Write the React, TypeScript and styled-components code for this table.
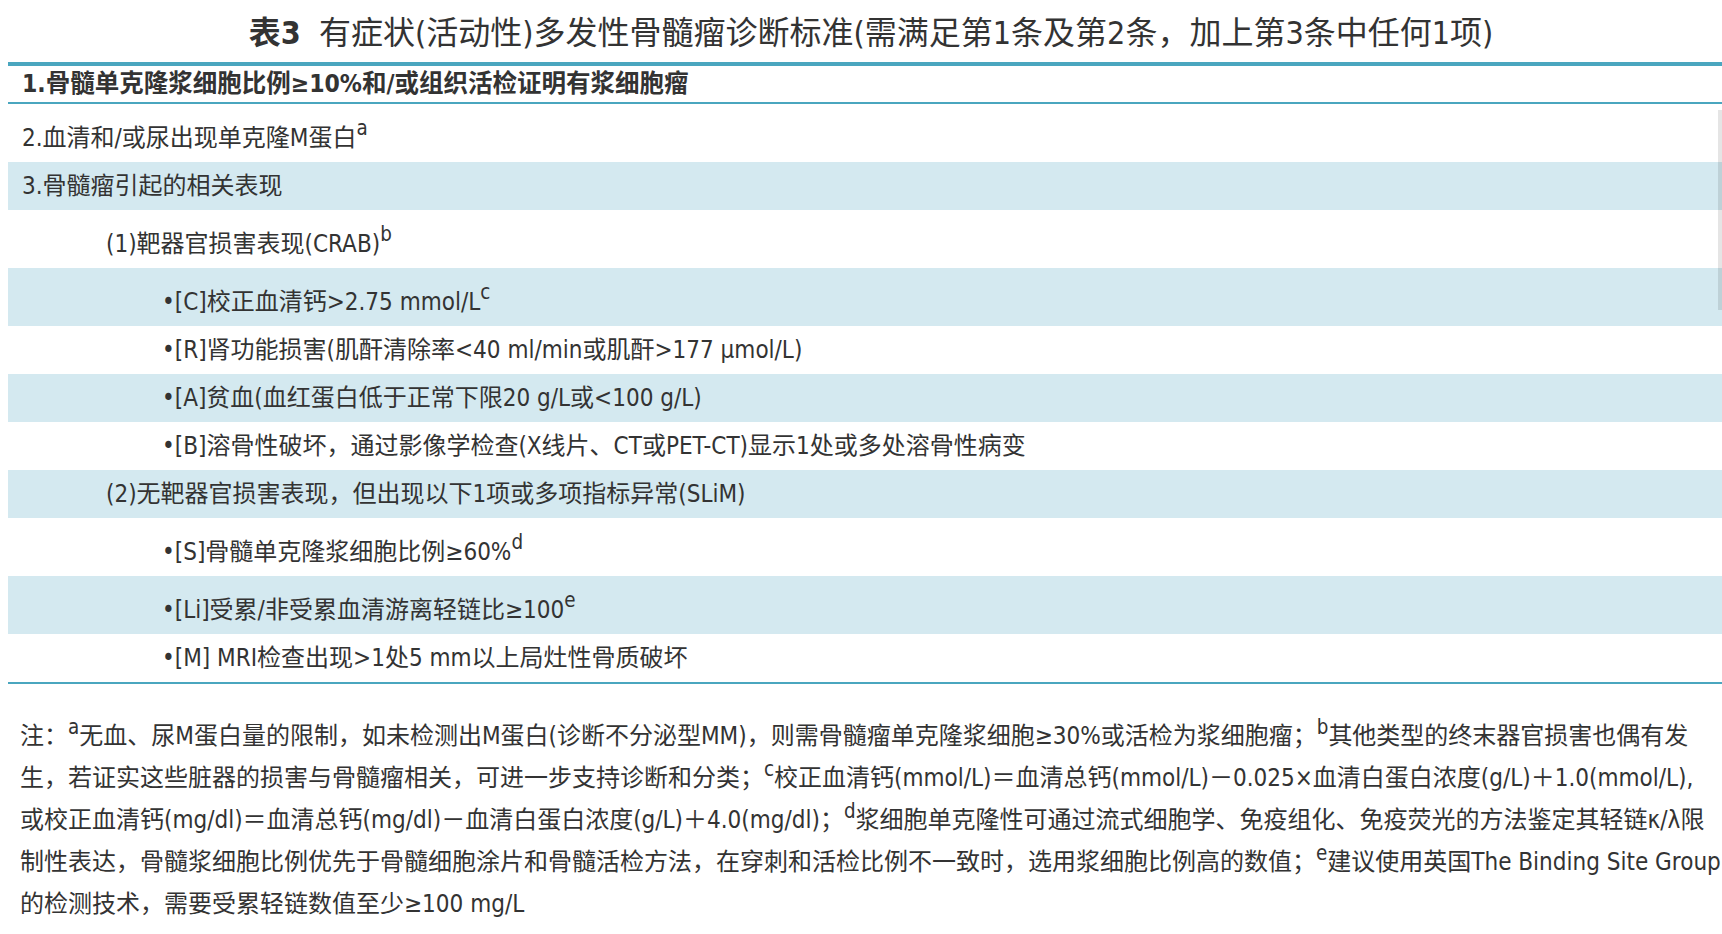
import React from "react";
import styled, { createGlobalStyle } from "styled-components";

const GlobalStyle = createGlobalStyle`
  html, body {
    margin: 0;
    padding: 0;
    background: #fff;
  }
  body {
    font-family: "DejaVu Sans Condensed", "DejaVu Sans", "Noto Sans CJK SC", sans-serif;
    color: #333;
  }
`;

const TEAL = "#4aa6bf";
const BAND = "#d4e9f0";

type Row = {
  text: string;
  sup?: string;
  level: 0 | 1 | 2;
};

const rows: Row[] = [
  { text: "2.血清和/或尿出现单克隆M蛋白", sup: "a", level: 0 },
  { text: "3.骨髓瘤引起的相关表现", level: 0 },
  { text: "(1)靶器官损害表现(CRAB)", sup: "b", level: 1 },
  { text: "•[C]校正血清钙>2.75 mmol/L", sup: "c", level: 2 },
  { text: "•[R]肾功能损害(肌酐清除率<40 ml/min或肌酐>177 μmol/L)", level: 2 },
  { text: "•[A]贫血(血红蛋白低于正常下限20 g/L或<100 g/L)", level: 2 },
  {
    text: "•[B]溶骨性破坏，通过影像学检查(X线片、CT或PET-CT)显示1处或多处溶骨性病变",
    level: 2,
  },
  { text: "(2)无靶器官损害表现，但出现以下1项或多项指标异常(SLiM)", level: 1 },
  { text: "•[S]骨髓单克隆浆细胞比例≥60%", sup: "d", level: 2 },
  { text: "•[Li]受累/非受累血清游离轻链比≥100", sup: "e", level: 2 },
  { text: "•[M] MRI检查出现>1处5 mm以上局灶性骨质破坏", level: 2 },
];

const indent = [14, 98, 154];

const App = (): JSX.Element => {
  return (
    <Page>
      <GlobalStyle />
      <Title>
        <b>表3</b>&nbsp; 有症状(活动性)多发性骨髓瘤诊断标准(需满足第1条及第2条，加上第3条中任何1项)
      </Title>
      <Table>
        <HeadRow>1.骨髓单克隆浆细胞比例≥10%和/或组织活检证明有浆细胞瘤</HeadRow>
        {rows.map((r, i) => (
          <BodyRow key={i} $band={i % 2 === 1} $indent={indent[r.level]}>
            {r.text}
            {r.sup && <Sup>{r.sup}</Sup>}
          </BodyRow>
        ))}
        <Thumb />
      </Table>
      <Notes>
        注：<NoteSup>a</NoteSup>无血、尿M蛋白量的限制，如未检测出M蛋白(诊断不分泌型MM)，则需骨髓瘤单克隆浆细胞≥30%或活检为浆细胞瘤；
        <NoteSup>b</NoteSup>其他类型的终末器官损害也偶有发
        <br />
        生，若证实这些脏器的损害与骨髓瘤相关，可进一步支持诊断和分类；<NoteSup>c</NoteSup>
        校正血清钙(mmol/L)＝血清总钙(mmol/L)－0.025×血清白蛋白浓度(g/L)＋1.0(mmol/L),
        <br />
        或校正血清钙(mg/dl)＝血清总钙(mg/dl)－血清白蛋白浓度(g/L)＋4.0(mg/dl)；
        <NoteSup>d</NoteSup>浆细胞单克隆性可通过流式细胞学、免疫组化、免疫荧光的方法鉴定其轻链κ/λ限
        <br />
        制性表达，骨髓浆细胞比例优先于骨髓细胞涂片和骨髓活检方法，在穿刺和活检比例不一致时，选用浆细胞比例高的数值；
        <NoteSup>e</NoteSup>建议使用英国The Binding Site Group
        <br />
        的检测技术，需要受累轻链数值至少≥100 mg/L
      </Notes>
    </Page>
  );
};

export default App;

const Page = styled.div`
  padding: 13px 0 24px 8px;
  width: 1714px;
`;

const Title = styled.div`
  font-size: 32px;
  line-height: 40px;
  text-align: center;
  color: #333;
  margin-bottom: 9px;
  padding-left: 12px;
  white-space: nowrap;
  b {
    font-weight: 700;
  }
`;

const Table = styled.div`
  position: relative;
  border-top: 4px solid ${TEAL};
  border-bottom: 2px solid ${TEAL};
`;

const HeadRow = styled.div`
  height: 36px;
  line-height: 36px;
  padding-left: 14px;
  font-size: 24.5px;
  font-weight: 700;
  border-bottom: 2px solid ${TEAL};
  white-space: nowrap;
`;

const BodyRow = styled.div<{ $band: boolean; $indent: number }>`
  padding: 7px 0 7px ${(p) => p.$indent}px;
  font-size: 24px;
  line-height: 34px;
  background: ${(p) => (p.$band ? BAND : "transparent")};
  white-space: nowrap;
`;

const Sup = styled.sup`
  font-size: 0.85em;
  vertical-align: 11px;
`;

const Thumb = styled.div`
  position: absolute;
  right: 0;
  top: 44px;
  width: 4px;
  height: 200px;
  background: rgba(0, 0, 0, 0.1);
`;

const Notes = styled.div`
  margin-top: 31px;
  padding-left: 12px;
  font-size: 24px;
  line-height: 42px;
  white-space: nowrap;
`;

const NoteSup = styled.sup`
  font-size: 0.85em;
  vertical-align: 10px;
  line-height: 0;
`;
